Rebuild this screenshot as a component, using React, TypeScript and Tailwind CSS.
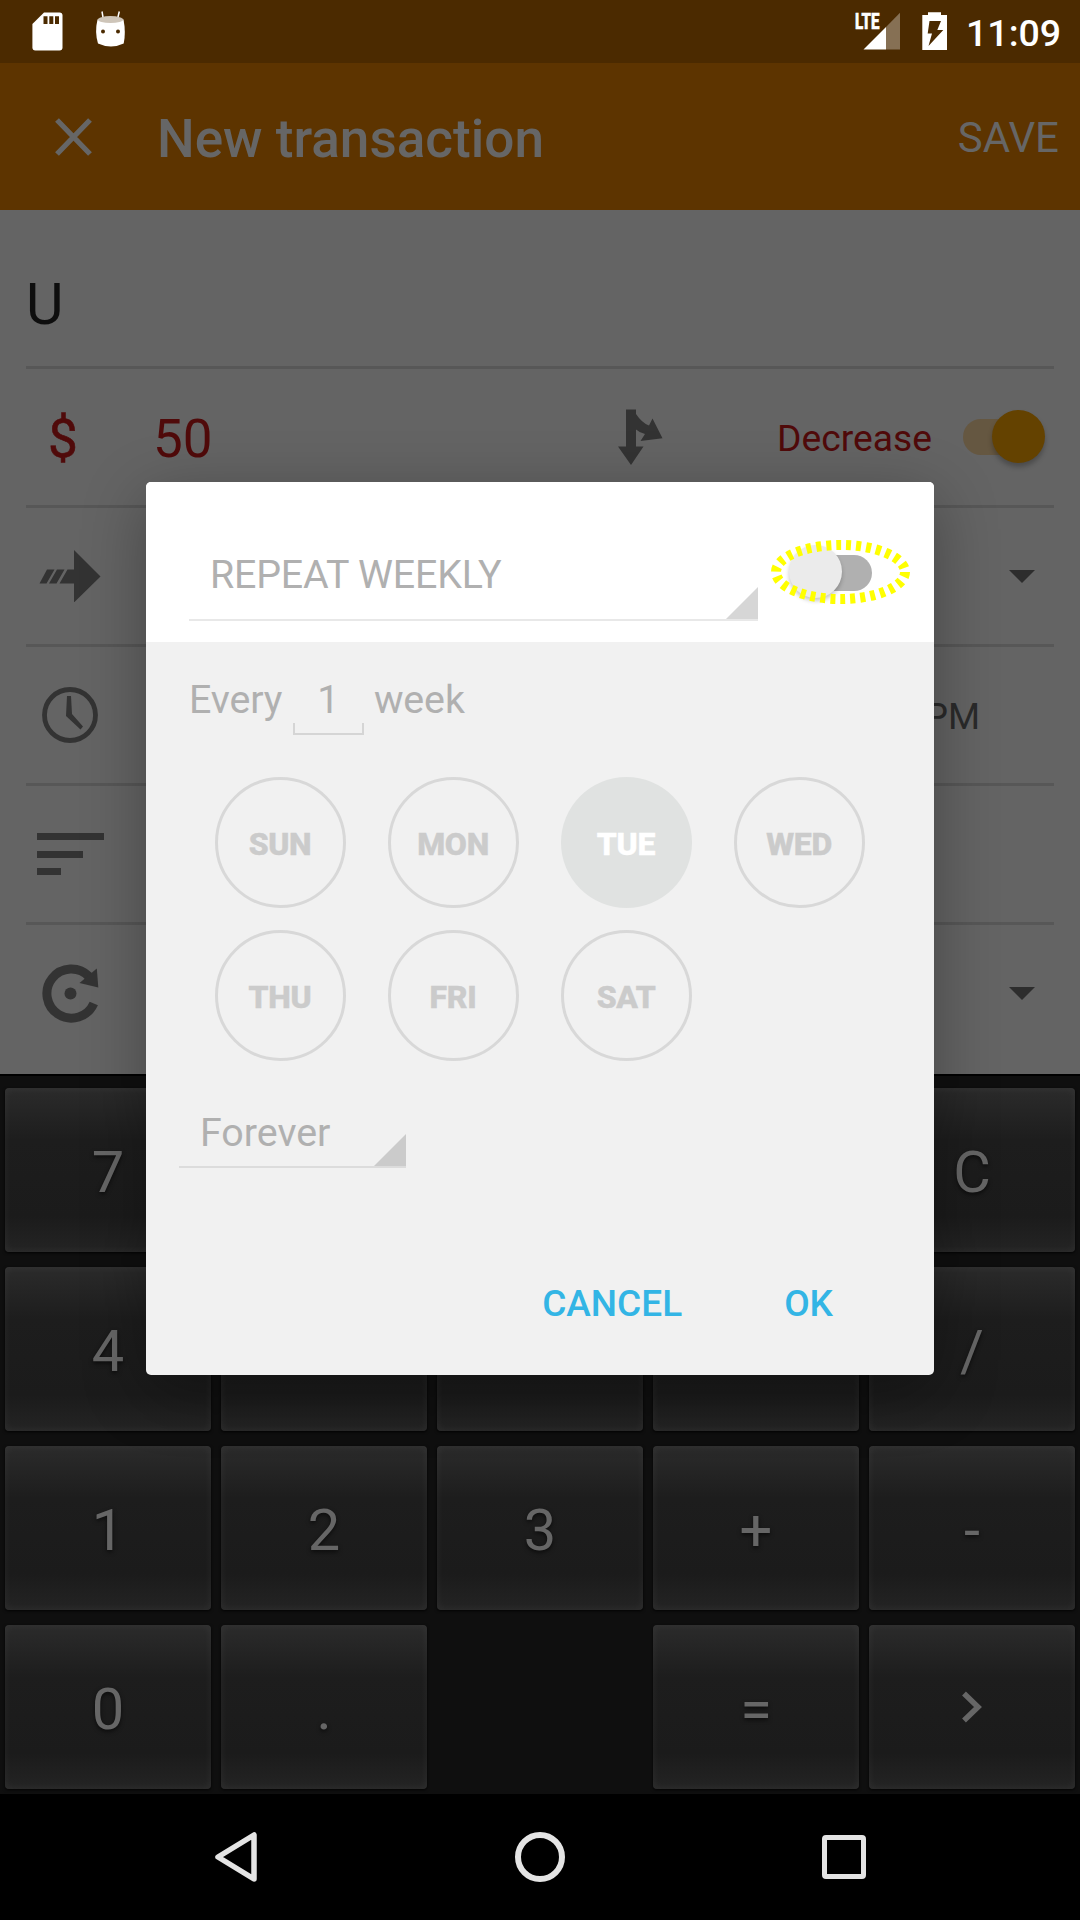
import React from "react";

const roboto = "font-['Roboto',sans-serif]";

function StatusBar() {
  return (
    <header className="flex h-[63px] shrink-0 items-start justify-between bg-[#4b2a00] text-white">
      <svg width="140" height="63" viewBox="0 0 140 63">
        <path d="M44 12.6H59.500Q62.500 12.600 62.500 15.600V47.500Q62.500 50.500 59.500 50.500H35.400Q32.400 50.500 32.400 47.500V24Z" fill="#fff" />
        <path d="M43.500 16.300h4v7.700h-4zM49.300 16.300h4v7.700h-4zM55 16.300h4v7.700h-4z" fill="#4b2a00" />
        <path d="M102 11.500L103.300 19M119.300 11.500L117.500 19" stroke="#fff" strokeWidth="1.500" />
        <path d="M97.500 19.500H123.500Q126 32 123.700 43.500Q111 49.500 98 43.500Q94.500 32 97.500 19.500Z" fill="#fff" />
        <ellipse cx="110.500" cy="19.600" rx="12.800" ry="3.500" fill="#cec5b9" />
        <circle cx="103" cy="31.500" r="2" fill="#4b2a00" />
        <circle cx="118" cy="31.500" r="2" fill="#4b2a00" />
      </svg>
      <div className="flex h-full items-center">
        <svg width="120" height="63" viewBox="846 0 120 63" className={roboto}>
          <text x="855" y="29.300" fontSize="22.500" fontWeight="800" fill="#fff" stroke="#fff" strokeWidth="0.700" textLength="24.500" lengthAdjust="spacingAndGlyphs">LTE</text>
          <path d="M900 12.700V49.500H886V27Z" fill="#fff" fillOpacity="0.330" />
          <path d="M886 27V49.500H863.500Z" fill="#fff" />
          <path d="M922.300 15H928V12.300H941V15H947V50H922.300Z" fill="#fff" />
          <path d="M929.500 21H941L937.300 30H943.300L928.500 46L932 33.500H927.700Z" fill="#4b2a00" />
        </svg>
        <span className="mr-[25px] w-[89px] pt-[5px] text-right text-[37.500px] leading-none font-medium whitespace-nowrap">11:09</span>
      </div>
    </header>
  );
}

function AppBar() {
  return (
    <div className="flex h-[147px] shrink-0 items-center bg-[#5d3400] pt-[1px] text-[#666]">
      <svg width="39" height="39" viewBox="0 0 39 39" className="ml-[54px]">
        <path d="M3 2L36 36M36 2L3 36" stroke="#666" strokeWidth="5.300" />
      </svg>
      <h1 className="ml-[64px] pt-[5px] text-[53.100px] leading-none font-medium">New transaction</h1>
      <button className="mr-[21px] ml-auto pt-[2px] text-[42px] leading-none">SAVE</button>
    </div>
  );
}

function Caret() {
  return (
    <svg width="26" height="13" viewBox="0 0 26 13" className="mr-[19px] ml-auto">
      <path d="M0 0H26L13 13Z" fill="#2d2d2d" />
    </svg>
  );
}

function Row({ children }: { children?: React.ReactNode }) {
  return (
    <div className="flex h-[139px] shrink-0 items-center border-b-[3px] border-[#575757]">{children}</div>
  );
}

function Form() {
  return (
    <main className="flex h-[864px] shrink-0 flex-col bg-[#646464] px-[26px]">
      <div className="flex h-[159px] items-center border-b-[3px] border-[#575757] pt-[33px] text-[57.750px] leading-none text-[#0e0e0e]">
        <span>U</span>
      </div>
      <Row>
        <span className="ml-[22px] w-[30px] pt-[4px] text-center text-[53px] leading-none text-[#500a0a] [-webkit-text-stroke:0.600px_#500a0a]">$</span>
        <span className="ml-[75px] pt-[4px] text-[53px] leading-none text-[#500a0a]">50</span>
        <svg width="46" height="56" viewBox="618 409 46 56" className="ml-auto">
          <path d="M626 409.500H636V414Q642 423 649 425.500L652.500 418.500L662.500 438.300L640.500 441L645 434Q640 433 636 429.500V446.500H643.500L631 465L618 446.500H626Z" fill="#333" />
        </svg>
        <span className="ml-[113px] pt-[4px] text-[37.250px] leading-none text-[#500a0a]">Decrease</span>
        <div className="relative mr-[19px] ml-[31px] h-[36px] w-[72px] rounded-full bg-[#655741]">
          <span className="absolute -top-[9px] right-[-10px] size-[53px] rounded-full bg-[#644200] shadow-[0_4px_5px_rgba(0,0,0,0.25)]" />
        </div>
      </Row>
      <Row>
        <svg width="62" height="52" viewBox="39 549.500 62 52" className="mb-[1px] ml-[13px]">
          <path d="M74 549.500L100.500 576L74 602V583H59.500L67.500 569H74ZM47 569H54.500L46.500 583H39.500ZM57 569H64.500L56.500 583H49Z" fill="#333" />
        </svg>
        <Caret />
      </Row>
      <Row>
        <svg width="56" height="56" viewBox="0 0 56 56" className="ml-[16px]">
          <circle cx="28" cy="28" r="25.500" fill="none" stroke="#333" strokeWidth="4.800" />
          <path d="M25 9H29L30 27L41 39.500L38.500 42.500L24 29Z" fill="#333" />
        </svg>
        <span className="mr-[74px] ml-auto pt-[4px] text-[36.750px] leading-none text-[#2a2a2a]">PM</span>
      </Row>
      <Row>
        <div className="ml-[10.500px] flex flex-col gap-[10.500px]">
          <span className="h-[7px] w-[67px] bg-[#333]" />
          <span className="h-[7px] w-[46px] bg-[#333]" />
          <span className="h-[7px] w-[24px] bg-[#333]" />
        </div>
      </Row>
      <div className="flex h-[137px] items-center">
        <svg width="58" height="60" viewBox="0 0 58 60" className="mb-[2px] ml-[15.500px]">
          <path d="M51.800 40.500A24.500 24.500 0 1 1 47 13.500" fill="none" stroke="#333" strokeWidth="9" />
          <path d="M54.800 5.500L56.300 24.500L37.500 20Z" fill="#333" />
          <circle cx="28.500" cy="30.500" r="6" fill="#333" />
        </svg>
        <Caret />
      </div>
    </main>
  );
}

// Empty strings are keys with no label in view; null leaves a gap in the grid.
const keys: (string | null)[] = [
  "7", "", "", "", "C",
  "4", "", "", "", "/",
  "1", "2", "3", "+", "-",
  "0", ".", null, "=", "next",
];

function Keypad() {
  return (
    <section className="grid h-[720px] shrink-0 grid-cols-5 gap-x-[10px] gap-y-[15px] border-t-2 border-black bg-[#0f0f0f] px-[5px] pt-[12px] pb-[5px]">
      {keys.map((k, i) =>
        k === null ? (
          <span key={i} />
        ) : (
          <button
            key={i}
            className="flex h-[164px] items-center justify-center rounded-[4px] bg-[linear-gradient(to_bottom,#2b2b2b_0%,#1d1d1d_32%,#1b1b1b_78%,#242424_100%)] text-[57.750px] leading-none text-[#666] shadow-[0_1px_3px_rgba(0,0,0,0.9),inset_0_0_8px_rgba(255,255,255,0.06)] [text-shadow:0_2px_4px_rgba(0,0,0,0.6)]"
          >
            {k === "next" ? (
              <svg width="20" height="32" viewBox="0 0 20 32">
                <path d="M2 2.500L16 16L2 29.500" fill="none" stroke="#666" strokeWidth="5.500" />
              </svg>
            ) : (
              <span className="pt-[6px]">{k}</span>
            )}
          </button>
        ),
      )}
    </section>
  );
}

function NavBar() {
  return (
    <nav className="flex h-[126px] shrink-0 items-center justify-between bg-black pr-[214px] pl-[214px]">
      <svg width="44" height="52" viewBox="0 0 44 52">
        <path d="M40 4V48L4 26Z" fill="none" stroke="#e4e4e4" strokeWidth="5.500" strokeLinejoin="round" />
      </svg>
      <span className="size-[50px] rounded-full border-[6px] border-[#e4e4e4]" />
      <span className="size-[44px] rounded-[4px] border-[5px] border-[#e4e4e4]" />
    </nav>
  );
}

const days = ["SUN", "MON", "TUE", "WED", "THU", "FRI", "SAT"];

function RepeatDialog() {
  return (
    <div
      role="dialog"
      className="absolute top-[482px] left-[146px] flex h-[893px] w-[788px] flex-col overflow-hidden rounded-[5px] bg-[#f1f1f1] text-[#b0b0b0] shadow-[0_16px_64px_rgba(0,0,0,0.32)]"
    >
      <div className="flex h-[160px] shrink-0 bg-white pl-[43px]">
        <div className="mt-[56px] flex h-[83px] w-[569px] items-center justify-between border-b-2 border-[#e8e8e8]">
          <span className="pb-[8px] pl-[21px] text-[39.375px] leading-none tracking-[-0.2px]">REPEAT WEEKLY</span>
          <svg width="32" height="32" viewBox="0 0 32 32" className="self-end">
            <path d="M32 0V32H0Z" fill="#d6d6d6" />
          </svg>
        </div>
        <div className="relative mt-[58px] ml-[13px] h-[65px] w-[142px]">
          <span className="absolute top-[15px] left-[28px] h-[36px] w-[73px] rounded-full bg-[#b0b0b0]" />
          <span className="absolute top-[5px] left-[18px] size-[53px] rounded-full bg-[#ebebeb] shadow-[0_3px_4px_rgba(0,0,0,0.22)]" />
          <svg width="142" height="65" viewBox="0 0 142 65" className="absolute inset-0">
            <ellipse cx="69.500" cy="32" rx="64.500" ry="27" fill="none" stroke="#ffff00" strokeWidth="10" strokeDasharray="5 5" />
          </svg>
        </div>
      </div>
      <div className="flex h-[94px] shrink-0 items-end pb-[1px] pl-[43px] text-[39.375px] leading-none">
        <span className="mb-[16px] tracking-[-0.1px]">Every</span>
        <div className="ml-[10.500px] flex flex-col">
          <span className="mb-[4px] text-center">1</span>
          <span className="h-[12px] w-[71px] border-2 border-t-0 border-[#d5d5d5]" />
        </div>
        <span className="mb-[16px] ml-[10px] tracking-[-0.1px]">week</span>
      </div>
      <div className="mt-[41px] grid shrink-0 grid-cols-[repeat(4,131px)] gap-x-[42px] gap-y-[22px] pl-[69px]">
        {days.map((d) => (
          <button
            key={d}
            className={
              d === "TUE"
                ? "flex size-[131px] items-center justify-center rounded-full bg-[#e0e2e1] pt-[3px] pr-[1px] text-[32px] leading-none font-extrabold tracking-[-0.3px] text-white [-webkit-text-stroke:0.500px_#fff]"
                : "flex size-[131px] items-center justify-center rounded-full border-[3px] border-[#d8d8d8] pt-[3px] pr-[1px] text-[32px] leading-none font-extrabold tracking-[-0.3px] text-[#cbcbcb] [-webkit-text-stroke:0.500px_#cbcbcb]"
            }
          >
            {d}
          </button>
        ))}
      </div>
      <div className="mt-[46px] ml-[33px] flex h-[61px] w-[227px] shrink-0 items-end justify-between border-b-2 border-[#dcdcdc]">
        <span className="pb-[14px] pl-[21px] text-[39.375px] leading-none">Forever</span>
        <svg width="32" height="32" viewBox="0 0 32 32">
          <path d="M32 0V32H0Z" fill="#cbcbcb" />
        </svg>
      </div>
      <div className="mt-[117px] flex justify-end gap-[102px] pr-[101px] text-[37px] leading-none font-medium text-[#33b5e5]">
        <button>CANCEL</button>
        <button>OK</button>
      </div>
    </div>
  );
}

export default function App() {
  return (
    <div className="relative flex h-[1920px] w-[1080px] flex-col overflow-hidden bg-black font-['Roboto',sans-serif]">
      <StatusBar />
      <AppBar />
      <Form />
      <Keypad />
      <NavBar />
      <RepeatDialog />
    </div>
  );
}
